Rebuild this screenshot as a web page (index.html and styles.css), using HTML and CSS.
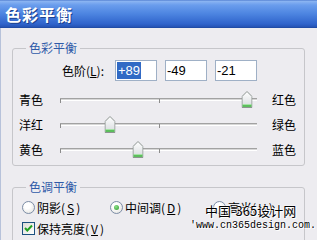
FILE: index.html
```html
<!DOCTYPE html>
<html lang="zh-cn">

<head>
  <meta charset="UTF-8">
  <meta name="viewport" content="width=device-width, initial-scale=1.0">
  <title>色彩平衡</title>
  <link rel="stylesheet" href="styles.css">
</head>

<body>

  <div class="window">
    <div class="titlebar">色彩平衡</div>

    <div class="client">
      <fieldset class="group">
        <legend>色彩平衡</legend>

        <div class="levels">
          <span class="levels-label">色阶(<u>L</u>):</span>
          <span class="field"><span class="selected">+89</span></span>
          <span class="field">-49</span>
          <span class="field">-21</span>
        </div>

        <div class="slider-row first">
          <span class="side-label">青色</span>
          <div class="track">
            <i class="tick tick-start"></i><i class="tick tick-mid"></i>
            <span class="thumb" style="left: 95%">
              <svg width="11" height="17" viewBox="0 0 11 17"><defs><linearGradient id="tg1" x1="0" y1="0" x2="0" y2="1"><stop offset="0" stop-color="#ffffff"/><stop offset="1" stop-color="#d6dadd"/></linearGradient></defs><path d="M0.5 5.5 L5.5 0.5 L10.5 5.5 V16.5 H0.5 Z" fill="url(#tg1)" stroke="#8c9490"/><rect x="1" y="13" width="9" height="3" fill="#5cbf5c"/><path d="M1 13.5 H10" stroke="#a6e2a6"/></svg>
            </span>
          </div>
          <span class="side-label right">红色</span>
        </div>

        <div class="slider-row">
          <span class="side-label">洋红</span>
          <div class="track">
            <i class="tick tick-start"></i><i class="tick tick-mid"></i>
            <span class="thumb" style="left: 25.5%">
              <svg width="11" height="17" viewBox="0 0 11 17"><path d="M0.5 5.5 L5.5 0.5 L10.5 5.5 V16.5 H0.5 Z" fill="url(#tg1)" stroke="#8c9490"/><rect x="1" y="13" width="9" height="3" fill="#5cbf5c"/><path d="M1 13.5 H10" stroke="#a6e2a6"/></svg>
            </span>
          </div>
          <span class="side-label right">绿色</span>
        </div>

        <div class="slider-row">
          <span class="side-label">黄色</span>
          <div class="track">
            <i class="tick tick-start"></i><i class="tick tick-mid"></i>
            <span class="thumb" style="left: 39.5%">
              <svg width="11" height="17" viewBox="0 0 11 17"><path d="M0.5 5.5 L5.5 0.5 L10.5 5.5 V16.5 H0.5 Z" fill="url(#tg1)" stroke="#8c9490"/><rect x="1" y="13" width="9" height="3" fill="#5cbf5c"/><path d="M1 13.5 H10" stroke="#a6e2a6"/></svg>
            </span>
          </div>
          <span class="side-label right">蓝色</span>
        </div>
      </fieldset>

      <fieldset class="group tone">
        <legend>色调平衡</legend>

        <div class="tone-row">
          <label class="option shadow"><span class="radio"></span>阴影(<u>S</u>)</label>
          <label class="option midtone"><span class="radio checked"></span>中间调(<u>D</u>)</label>
          <label class="option"><span class="radio"></span>高光(<u>H</u>)</label>
        </div>

        <div class="tone-row check-row">
          <label class="option">
            <span class="check">
              <svg width="11" height="11" viewBox="0 0 11 11"><path d="M2 5 L4.3 7.5 L9 2.5" fill="none" stroke="#21a121" stroke-width="2"/></svg>
            </span>保持亮度(<u>V</u>)
          </label>
        </div>
      </fieldset>
    </div>

    <div class="watermark">
      <div class="wm-cn">中国-365设计网</div>
      <div class="wm-url">'www.cn365design.com.</div>
    </div>
  </div>

</body>

</html>
```

FILE: styles.css
```css
body {
  margin: 0;
  background-color: #edecf0;
  color: #000;
  font-family: "Noto Sans CJK SC", sans-serif;
  font-size: 12px;
}

.window {
  position: relative;
  width: 317px;
  height: 240px;
  overflow: hidden;
  background-color: #edecf0;
  box-shadow: inset 1px 0 #b7c2da;
}

.titlebar {
  height: 28px;
  box-sizing: border-box;
  padding: 4px 0 0 5px;
  color: #fff;
  font-weight: bold;
  font-size: 16px;
  letter-spacing: 1px;
  line-height: 20px;
  text-shadow: 1px 1px 0 #1d428f;
  background: linear-gradient(#4270c8 0, #8db6f2 1px, #6a9ded 5px, #4c84e0 14px, #2f63cb 24px, #2553b4 27px, #1b4599 28px);
}

.client {
  padding: 13px 12px 0;
}

.group {
  margin: 0;
  padding: 0 6px 3px;
  border: 1px solid #c6c6ca;
  border-radius: 3px;
}

.group legend {
  margin-left: 7px;
  padding: 0 3px;
  color: #2f5aa8;
  line-height: 14px;
}

.levels {
  display: flex;
  align-items: center;
  height: 21px;
  margin-top: 5px;
  padding-left: 43px;
}

.levels-label {
  width: 53px;
}

.field {
  width: 42px;
  height: 21px;
  box-sizing: border-box;
  margin-right: 8px;
  padding-left: 1px;
  border: 1px solid #9fb0c6;
  background-color: #fff;
  font-family: "Liberation Sans", sans-serif;
  font-size: 13px;
  line-height: 19px;
}

.selected {
  display: inline-block;
  padding: 0 1px;
  line-height: 17px;
  background-color: #316ac5;
  color: #fff;
}

.slider-row {
  display: flex;
  align-items: center;
  height: 25px;
}

.slider-row.first {
  margin-top: 6px;
}

.side-label {
  width: 41px;
}

.side-label.right {
  width: auto;
  margin-left: 15px;
}

.track {
  position: relative;
  width: 197px;
  height: 1px;
  border-top: 1px solid #a2a2a2;
  border-bottom: 1px solid #fff;
  background-color: #d6d6d6;
}

.tick {
  position: absolute;
  top: 0;
  width: 1px;
  height: 4px;
  background-color: #8c8c8c;
}

.tick-start {
  left: 0;
}

.tick-mid {
  left: 99px;
}

.thumb {
  position: absolute;
  top: -8px;
  width: 11px;
  height: 17px;
  transform: translateX(-50%);
}

.thumb svg {
  display: block;
}

.tone {
  margin-top: 14px;
  padding-bottom: 20px;
}

.tone-row {
  display: flex;
  align-items: center;
  height: 20px;
  margin-top: 3px;
  padding-left: 3px;
}

.check-row {
  margin-top: 1px;
}

.option {
  display: flex;
  align-items: center;
  gap: 2px;
}

.option.shadow {
  width: 88px;
}

.option.midtone {
  width: 103px;
}

.radio {
  position: relative;
  width: 13px;
  height: 13px;
  box-sizing: border-box;
  border: 1px solid #7c8da6;
  border-radius: 50%;
  background: radial-gradient(circle at 40% 35%, #ffffff 30%, #dcdcd8 100%);
}

.radio.checked::after {
  content: "";
  position: absolute;
  left: 3px;
  top: 3px;
  width: 5px;
  height: 5px;
  border-radius: 50%;
  background: radial-gradient(circle at 40% 35%, #8ee08a, #2c9a2c);
}

.check {
  width: 13px;
  height: 13px;
  box-sizing: border-box;
  padding: 0;
  border: 1px solid #1c5180;
  background: linear-gradient(135deg, #dcdcd6, #ffffff);
}

.check svg {
  display: block;
}

.watermark {
  position: absolute;
  left: 190px;
  top: 202px;
  color: #000;
  text-shadow: 0 0 2px #fff, 0 0 2px #fff, 1px 1px 0 #fff;
}

.wm-cn {
  margin-left: 15px;
  font-size: 13px;
  line-height: 17px;
}

.wm-url {
  margin-top: 1px;
  font-family: "Liberation Mono", monospace;
  font-size: 10px;
  line-height: 12px;
}
```
